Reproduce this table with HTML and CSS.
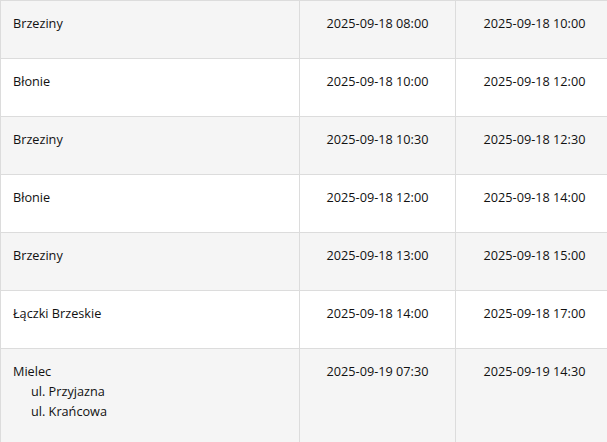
FILE: index.html
```html
<!DOCTYPE html>
<html lang="pl">
<head>
    <meta charset="UTF-8">
    <meta name="viewport" content="width=device-width, initial-scale=1.0">
    <title>Harmonogram</title>
    <link rel="stylesheet" href="styles.css">
</head>
<body>
    <table class="schedule">
        <colgroup>
            <col class="col-place">
            <col class="col-time">
            <col class="col-time-end">
        </colgroup>
        <tbody>
            <tr>
                <td>Brzeziny</td>
                <td class="time">2025-09-18 08:00</td>
                <td class="time">2025-09-18 10:00</td>
            </tr>
            <tr>
                <td>Błonie</td>
                <td class="time">2025-09-18 10:00</td>
                <td class="time">2025-09-18 12:00</td>
            </tr>
            <tr>
                <td>Brzeziny</td>
                <td class="time">2025-09-18 10:30</td>
                <td class="time">2025-09-18 12:30</td>
            </tr>
            <tr>
                <td>Błonie</td>
                <td class="time">2025-09-18 12:00</td>
                <td class="time">2025-09-18 14:00</td>
            </tr>
            <tr>
                <td>Brzeziny</td>
                <td class="time">2025-09-18 13:00</td>
                <td class="time">2025-09-18 15:00</td>
            </tr>
            <tr>
                <td>Łączki Brzeskie</td>
                <td class="time">2025-09-18 14:00</td>
                <td class="time">2025-09-18 17:00</td>
            </tr>
            <tr class="tall">
                <td>
                    Mielec
                    <ul class="streets">
                        <li>ul. Przyjazna</li>
                        <li>ul. Krańcowa</li>
                    </ul>
                </td>
                <td class="time">2025-09-19 07:30</td>
                <td class="time">2025-09-19 14:30</td>
            </tr>
        </tbody>
    </table>
</body>
</html>
```

FILE: styles.css
```css
* {
    margin: 0;
    padding: 0;
    box-sizing: border-box;
}

html, body {
    overflow: hidden;
}

body {
    font-family: "Open Sans", "Noto Sans", Arial, sans-serif;
    font-size: 12.7px;
    line-height: 20px;
    color: #111;
    background: white;
}

.schedule {
    border-collapse: collapse;
    table-layout: fixed;
    width: 614px;
}

.col-place {
    width: 299px;
}

.col-time {
    width: 156px;
}

.schedule td {
    border: 1px solid #dcdcdc;
    height: 58px;
    padding: 12px 12px 10px;
    vertical-align: top;
}

.schedule tr:nth-child(odd) {
    background: #f5f5f5;
}

.schedule td.time {
    text-align: center;
}

.schedule tr.tall td {
    height: 110px;
}

.streets {
    list-style: none;
    padding-left: 18px;
}
```
